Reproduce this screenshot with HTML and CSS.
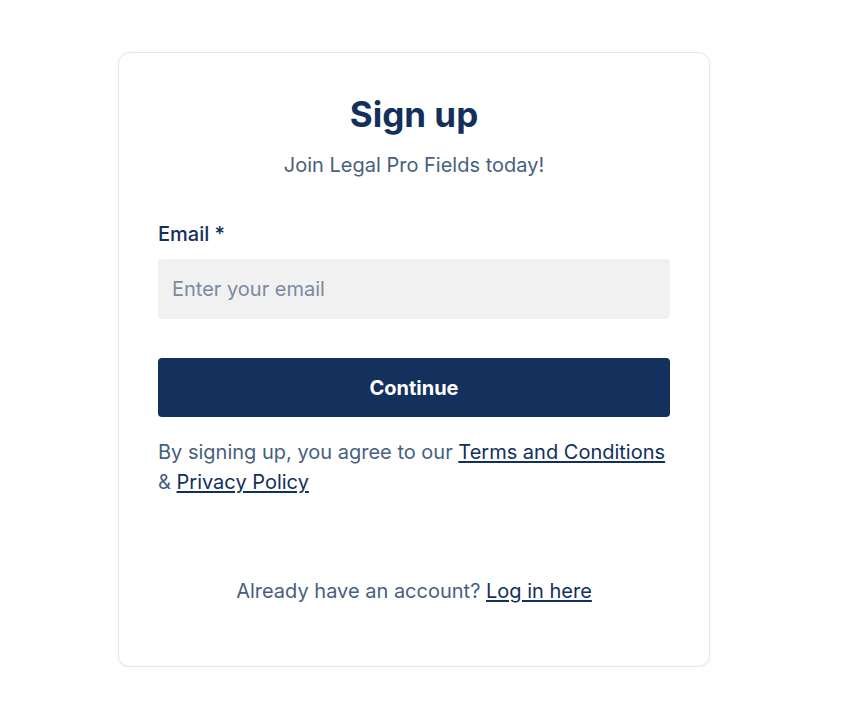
FILE: index.html
```html
<!DOCTYPE html>
<html lang="en">
<head>
<meta charset="utf-8">
<title>Sign up</title>
<link rel="stylesheet" href="styles.css">
</head>
<body>
<div class="page">
  <div class="card">
    <h1 class="title">Sign up</h1>
    <p class="subtitle">Join Legal Pro Fields today!</p>
    <form class="form">
      <label class="label" for="email">Email *</label>
      <input class="input" id="email" type="email" placeholder="Enter your email">
      <button class="button" type="button">Continue</button>
    </form>
    <p class="terms">By signing up, you agree to our <a href="#" class="link">Terms and Conditions</a> &amp; <a href="#" class="link">Privacy Policy</a></p>
    <p class="footer">Already have an account? <a href="#" class="link">Log in here</a></p>
  </div>
</div>
</body>
</html>
```
FILE: styles.css
```css
* { box-sizing: border-box; }
html, body { margin: 0; padding: 0; background: #fff; }
body { font-family: Inter, "Noto Sans", sans-serif; color: #475f7f; }
.page { padding: 52px 0 0 118px; }
.card {
  width: 592px;
  border: 1px solid #e5e7eb;
  border-radius: 12px;
  box-shadow: 0 1px 3px rgba(0,0,0,0.08);
  padding: 39px 39px 61px;
  background: #fff;
}
.title {
  margin: 0;
  text-align: center;
  font-size: 35px;
  line-height: 44px;
  font-weight: 700;
  color: #132f5b;
}
.subtitle {
  margin: 15px 0 0;
  text-align: center;
  font-size: 20px;
  line-height: 28px;
  color: #475f7f;
}
.form { display: flex; flex-direction: column; margin-top: 41px; }
.label { font-size: 20px; line-height: 28px; font-weight: 500; color: #132f5b; }
.input {
  margin-top: 11px;
  height: 60px;
  border: none;
  border-radius: 4px;
  background: #f1f1f1;
  padding: 0 14px;
  font-family: inherit;
  font-size: 20px;
  color: #132f5b;
  outline: none;
}
.input::placeholder { color: #7a8aa3; }
.button {
  margin-top: 39px;
  height: 59px;
  border: none;
  border-radius: 4px;
  background: #14305c;
  color: #fff;
  font-family: inherit;
  font-size: 20px;
  font-weight: 700;
}
.terms { margin: 20px 0 0; font-size: 20px; line-height: 30px; color: #475f7f; }
.link { color: #132f5b; text-decoration: underline; text-underline-offset: 2px; }
.footer { margin: 80px 0 0; text-align: center; font-size: 20px; line-height: 28px; color: #475f7f; }
```
